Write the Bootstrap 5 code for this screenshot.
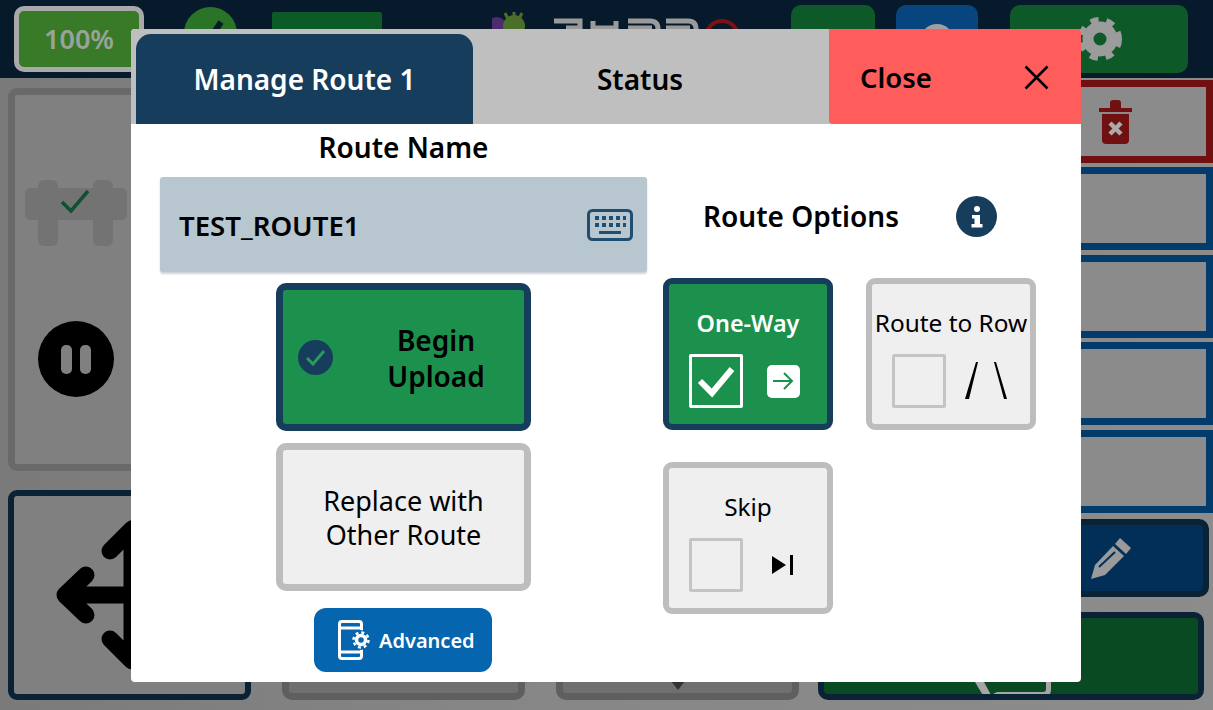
<!DOCTYPE html>
<html>

<head>
    <meta charset="utf-8">
    <meta name="viewport" content="width=device-width, initial-scale=1">
    <title>Manage Route</title>
    <link href="https://cdn.jsdelivr.net/npm/bootstrap@5.3.3/dist/css/bootstrap.min.css" rel="stylesheet">
    <style>
        body { width: 1213px; height: 710px; overflow: hidden; font-family: "Noto Sans", sans-serif; background: #828282; position: relative; color: #000; }

        /* dimmed app behind the dialog */
        .top-bar { height: 78px; background: #071a2b; padding-left: 14px; overflow: hidden; }
        .battery { width: 130px; height: 66px; margin-top: 6px; border: 5px solid #a9a9a9; border-radius: 10px; background: #387a28; color: #9aa39a; font-size: 27px; font-weight: 600; }
        .status-dot { width: 53px; height: 53px; margin: 7px 0 0 40px; border-radius: 50%; background: #2a7428; }
        .top-rect { width: 110px; height: 50px; margin: 12px 0 0 35px; background: #0c5a26; border-radius: 2px; }
        .top-logo { margin: 10px 0 0 110px; }
        .top-btn { height: 68px; margin-top: 5px; border-radius: 10px; background: #0d5a28; }
        .top-btn-a { width: 84px; margin-left: 39px; }
        .top-btn-b { width: 82px; margin-left: 21px; background: #07457e; }
        .top-btn-c { width: 178px; margin-left: 32px; padding-left: 68px; padding-top: 11px; }

        .app-body { height: 632px; padding: 10px 0 10px 8px; background: linear-gradient(90deg, #7a7a7a, #868686 40%, #8c8c8c); }
        .left-col { width: 243px; gap: 19px; }
        .pump-card { height: 383px; border: 7px solid #696969; border-radius: 9px; background: #808080; padding: 85px 0 0 10px; }
        .pump-inner { width: 102px; gap: 75px; }
        .move-card { height: 210px; border: 6px solid #0a2236; border-radius: 9px; background: #808080; }
        .mid-col { width: 517px; margin-left: 31px; gap: 31px; }
        .mid-card { width: 243px; height: 100px; border: 7px solid #5f5f5f; border-radius: 10px; background: #6f6f6f; }
        .pin-mark { margin-top: 74px; }
        .right-col { width: 395px; margin-left: 19px; margin-top: -8px; }
        .side-row { height: 83px; margin-bottom: 4.5px; border: 7px solid #033c6c; background: #8b8b8b; padding-right: 74px; }
        .side-row-red { border-color: #701010; margin-bottom: 4px; }
        .pencil-btn { height: 78px; margin: 6.5px 4px 15px 190px; border: 6px solid #0a2236; border-radius: 10px; background: #022f58; padding-right: 70px; }
        .go-btn { height: 88px; margin-right: 9px; border: 6px solid #0a2236; border-radius: 10px; background: #0a4a22; overflow: hidden; }
        .go-bubble { margin: 64px 0 0 151px; }

        /* dialog */
        .route-dialog { position: absolute; left: 131px; top: 29px; width: 950px; height: 653px; background: #fff; border-radius: 4px; overflow: hidden; }
        .dialog-tabs { height: 95px; background: #bfbfbf; padding: 5px 0 0 5px; font-size: 28px; font-weight: 600; }
        .tab-active { width: 337px; background: #163d5c; color: #fff; border-radius: 15px 15px 0 0; }
        .tab-status { width: 356px; padding-right: 22px; }
        .tab-close { width: 252px; margin-top: -5px; padding: 2px 32px 0 31px; background: #ff5c5c; border-radius: 0 0 0 4px; font-size: 27.500px; }

        .dialog-main { padding-left: 29px; gap: 16px; }
        .left-pane { width: 487px; }
        .pane-title { height: 53px; font-size: 28px; font-weight: 600; line-height: 47px; }
        .name-field { height: 95px; background: #b8c6cf; border-radius: 3px; padding: 0 14px 0 19px; font-size: 27.600px; font-weight: 600; box-shadow: 0 2px 2px rgba(90, 110, 125, .3); }
        .name-field span { padding-top: 3px; }
        .big-btn { width: 255px; height: 148px; border: 7px solid #bdbdbd; border-radius: 10px; background: #efefef; font-size: 27px; line-height: 34px; padding-top: 2px; }
        .big-btn-on { border-color: #163d5c; background: #1c914d; font-size: 28px; font-weight: 600; line-height: 36px; padding: 0 0 0 15px; margin: 11px 0 12px; }
        .big-btn-on span { width: 176px; margin-left: 15px; padding-top: 1px; }
        .adv-btn { width: 178px; height: 64px; margin: 17px 1px 0 0; padding: 0 0 0 24px; gap: 4px; background: #0565ae; border-radius: 12px; color: #fff; font-size: 20px; font-weight: 600; }
        .adv-btn span { padding-top: 1px; }

        .right-pane { padding-top: 62px; }
        .options-head { height: 60px; margin-bottom: 32px; padding-left: 40px; font-size: 28px; font-weight: 600; gap: 57px; }
        .options-grid { display: grid; grid-template-columns: 170px 170px; column-gap: 33px; row-gap: 32px; }
        .opt-tile { height: 152px; border: 6px solid #bdbdbd; border-radius: 9px; background: #efefef; padding-top: 24px; font-size: 24.400px; line-height: 30px; white-space: nowrap; }
        .opt-tile-on { border-color: #163d5c; background: #1c914d; color: #fff; font-weight: 600; font-size: 23.400px; }
        .opt-row { margin-top: 16px; padding-left: 20px; }
        .opt-box { width: 54px; height: 54px; border: 3px solid #c4c4c4; border-radius: 2px; }
        .opt-tile-on .opt-box { border-color: #fff; }
        .opt-icon { width: 80px; }
        .arrow-chip { width: 33px; height: 33px; background: #fff; border-radius: 5px; }
    </style>
</head>

<body>
    <!-- app behind -->
    <div class="top-bar d-flex align-items-start">
        <div class="battery d-flex align-items-center justify-content-center">100%</div>
        <div class="status-dot">
            <svg class="d-block" width="53" height="53" viewBox="0 0 53 53"><path d="M18 26l7 7 12-18" fill="none" stroke="#071a2b" stroke-width="6"/></svg>
        </div>
        <div class="top-rect"></div>
        <svg class="top-logo" width="260" height="24" viewBox="0 0 260 24">
            <circle cx="5" cy="16" r="9" fill="#4e2a6e"/>
            <circle cx="22" cy="16" r="11" fill="#4a7028"/>
            <path d="M13 3l3 6M22 2v7M30 3l-3 6" stroke="#4f6c2a" stroke-width="3"/>
            <path d="M62 11h26v14M88 18h-14M101 11v14M124 11v14M101 18h23M136 11h22q8 0 8 8M136 18h24M174 11h22q8 0 8 8M174 18h24" fill="none" stroke="#9a9a9a" stroke-width="5"/>
            <circle cx="230" cy="27" r="16" fill="none" stroke="#7c1212" stroke-width="4"/>
        </svg>
        <div class="top-btn top-btn-a"></div>
        <div class="top-btn top-btn-b d-flex justify-content-center">
            <svg width="44" height="50" viewBox="0 0 44 50"><circle cx="22" cy="36" r="17" fill="#a0a0a0"/></svg>
        </div>
        <div class="top-btn top-btn-c">
            <svg width="44" height="46" viewBox="0 0 44 46">
                <circle cx="22" cy="23" r="12" fill="none" stroke="#9c9c9c" stroke-width="11"/>
                <circle cx="22" cy="23" r="19" fill="none" stroke="#9c9c9c" stroke-width="6" stroke-dasharray="8 7.900"/>
            </svg>
        </div>
    </div>

    <div class="app-body d-flex">
        <div class="left-col d-flex flex-column">
            <div class="pump-card">
                <div class="pump-inner d-flex flex-column align-items-center">
                    <svg width="102" height="66" viewBox="0 0 102 66">
                        <rect x="0" y="8" width="102" height="32" rx="5" fill="#737373"/>
                        <rect x="13" y="0" width="20" height="66" rx="6" fill="#737373"/>
                        <rect x="68" y="0" width="20" height="66" rx="6" fill="#737373"/>
                        <path d="M37 22l9 9 17-20" fill="none" stroke="#0f5132" stroke-width="3.500"/>
                    </svg>
                    <div class="d-flex">
                        <svg width="76" height="76" viewBox="0 0 76 76">
                            <circle cx="38" cy="38" r="38" fill="#000"/>
                            <rect x="23" y="24" width="11" height="29" rx="5" fill="#808080"/>
                            <rect x="42" y="24" width="11" height="29" rx="5" fill="#808080"/>
                        </svg>
                    </div>
                </div>
            </div>
            <div class="move-card d-flex align-items-center justify-content-center">
                <svg width="160" height="160" viewBox="0 0 160 160" fill="none" stroke="#000" stroke-width="17" stroke-linecap="round" stroke-linejoin="round">
                    <path d="M82 14v132M15 80h133M60 36l22-22 22 22M60 124l22 22 22-22M36 60l-21 20 21 20"/>
                </svg>
            </div>
        </div>
        <div class="mid-col d-flex align-items-end">
            <div class="mid-card"></div>
            <div class="mid-card d-flex justify-content-center">
                <svg class="pin-mark" width="14" height="9" viewBox="0 0 14 9"><path d="M0 0h14L7 9z" fill="#333"/></svg>
            </div>
        </div>
        <div class="right-col">
            <div class="side-row side-row-red d-flex align-items-center justify-content-end">
                <svg width="33" height="44" viewBox="0 0 33 44">
                    <path d="M0 8h33v4H0zM11 3q0-3 3-3h5q3 0 3 3v5H11z" fill="#701010"/>
                    <path d="M3 14h27v26q0 4-4 4H7q-4 0-4-4z" fill="#701010"/>
                    <path d="M11 23l11 11M22 23L11 34" stroke="#aaa" stroke-width="4.500"/>
                </svg>
            </div>
            <div class="side-row"></div>
            <div class="side-row"></div>
            <div class="side-row"></div>
            <div class="side-row"></div>
            <div class="pencil-btn d-flex align-items-center justify-content-end">
                <svg width="44" height="44" viewBox="0 0 44 44">
                    <path d="M31 2l11 10-5 6-11-10z" fill="#9a9a9a"/>
                    <path d="M24 10l11 10-19 19-14 4 4-14z" fill="#9a9a9a"/>
                    <path d="M10 31l16-15" stroke="#022f58" stroke-width="2"/>
                </svg>
            </div>
            <div class="go-btn">
                <svg class="go-bubble d-block" width="76" height="20" viewBox="0 0 76 20">
                    <path d="M0 0h76v8q0 6-6 6H24l-12 6z" fill="#a6a6a6"/>
                    <path d="M9 0h62v7q0 3-3 3H22l-6 3z" fill="#0a4a22"/>
                </svg>
            </div>
        </div>
    </div>

    <!-- dialog -->
    <div class="route-dialog">
        <div class="dialog-tabs d-flex">
            <div class="tab-active d-flex align-items-center justify-content-center">Manage Route 1</div>
            <div class="tab-status d-flex align-items-center justify-content-center">Status</div>
            <div class="tab-close d-flex align-items-center justify-content-between">
                <span>Close</span>
                <svg width="25" height="25" viewBox="0 0 25 25"><path d="M1.500 1.500l22 22M23.500 1.500l-22 22" stroke="#000" stroke-width="2.600"/></svg>
            </div>
        </div>

        <div class="dialog-main d-flex">
            <div class="left-pane d-flex flex-column align-items-center">
                <div class="pane-title">Route Name</div>
                <div class="name-field w-100 d-flex align-items-center justify-content-between">
                    <span>TEST_ROUTE1</span>
                    <svg width="46" height="32" viewBox="0 0 46 32" fill="#1f4e70">
                        <rect x="1.500" y="1.500" width="43" height="29" rx="4" fill="none" stroke="#1f4e70" stroke-width="3"/>
                        <path d="M8 7h4v4H8zM15 7h4v4h-4zM22 7h4v4h-4zM29 7h4v4h-4zM36 7h3v4h-3zM8 14h4v4H8zM15 14h4v4h-4zM22 14h4v4h-4zM29 14h4v4h-4zM36 14h3v4h-3zM12 22h22v3H12z"/>
                    </svg>
                </div>
                <div class="big-btn big-btn-on d-flex align-items-center">
                    <svg width="35" height="35" viewBox="0 0 35 35" class="flex-shrink-0">
                        <circle cx="17.500" cy="17.500" r="17.500" fill="#163d5c"/>
                        <path d="M9 18l6 6 11-13" fill="none" stroke="#2c9a5c" stroke-width="3"/>
                    </svg>
                    <span class="text-center">Begin<br>Upload</span>
                </div>
                <div class="big-btn d-flex align-items-center justify-content-center text-center">Replace with<br>Other Route</div>
                <div class="adv-btn d-flex align-items-center">
                    <svg width="37" height="40" viewBox="0 0 37 40" class="flex-shrink-0">
                        <path d="M4 1.500h17q2.500 0 2.500 2.500v32q0 2.500-2.500 2.500H4q-2.500 0-2.500-2.500V4Q1.500 1.500 4 1.500zM2 8h21M2 32h21" fill="none" stroke="#fff" stroke-width="3"/>
                        <circle cx="23" cy="20" r="10" fill="#0565ae"/>
                        <circle cx="23" cy="20" r="4.500" fill="none" stroke="#fff" stroke-width="3.500"/>
                        <circle cx="23" cy="20" r="7.500" fill="none" stroke="#fff" stroke-width="2.500" stroke-dasharray="3 2.900"/>
                    </svg>
                    <span>Advanced</span>
                </div>
            </div>

            <div class="right-pane">
                <div class="options-head d-flex align-items-center">
                    <span>Route Options</span>
                    <svg width="41" height="41" viewBox="0 0 41 41" class="flex-shrink-0">
                        <circle cx="20.500" cy="20.500" r="20.500" fill="#163d5c"/>
                        <circle cx="21" cy="13" r="3" fill="#fff"/>
                        <path d="M16 19h8v9h2.500v3.500h-11V28h3v-5.500h-2.500z" fill="#fff"/>
                    </svg>
                </div>
                <div class="options-grid">
                    <div class="opt-tile opt-tile-on text-center">
                        One-Way
                        <div class="opt-row d-flex">
                            <div class="opt-box d-flex align-items-center justify-content-center">
                                <svg width="40" height="34" viewBox="0 0 40 34"><path d="M4 17l12 12L36 5" fill="none" stroke="#fff" stroke-width="6"/></svg>
                            </div>
                            <div class="opt-icon d-flex align-items-center justify-content-center">
                                <div class="arrow-chip d-flex align-items-center justify-content-center">
                                    <svg width="22" height="18" viewBox="0 0 22 18"><path d="M1 9h19M12 1l8 8-8 8" fill="none" stroke="#1c914d" stroke-width="2"/></svg>
                                </div>
                            </div>
                        </div>
                    </div>
                    <div class="opt-tile text-center">
                        Route to Row
                        <div class="opt-row d-flex">
                            <div class="opt-box"></div>
                            <div class="opt-icon d-flex align-items-center justify-content-center">
                                <svg width="42" height="38" viewBox="0 0 42 38">
                                    <path d="M11 0h2L4 37H0zM29 0h2l11 37h-3z" fill="#000"/>
                                </svg>
                            </div>
                        </div>
                    </div>
                    <div class="opt-tile text-center">
                        Skip
                        <div class="opt-row d-flex">
                            <div class="opt-box"></div>
                            <div class="opt-icon d-flex align-items-center justify-content-center">
                                <svg width="22" height="20" viewBox="0 0 22 20">
                                    <path d="M0 1l14 9-14 9z" fill="#000"/>
                                    <rect x="18" y="0" width="3" height="20" fill="#000"/>
                                </svg>
                            </div>
                        </div>
                    </div>
                </div>
            </div>
        </div>
    </div>

    <script src="https://cdn.jsdelivr.net/npm/bootstrap@5.3.3/dist/js/bootstrap.bundle.min.js"></script>
</body>

</html>
